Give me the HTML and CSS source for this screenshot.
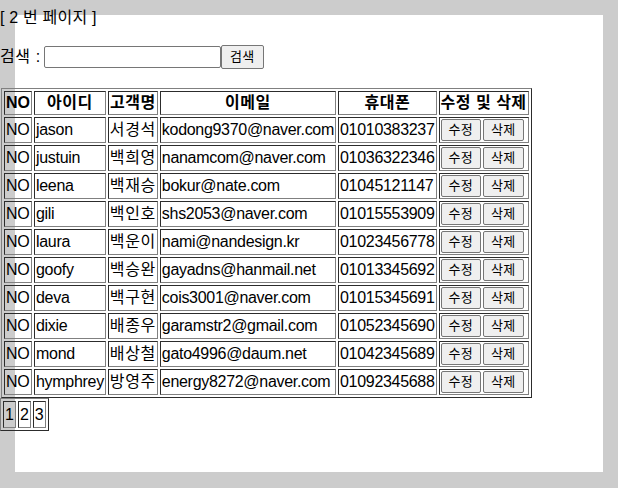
FILE: index.html
```html
<!DOCTYPE html>
<html lang="ko">
<head>
<meta charset="utf-8">
<link rel="stylesheet" href="styles.css">
</head>
<body>
<div class="title">[ 2 번 페이지 ]</div>
<form class="search">
  <span class="search-label">검색 :</span>
  <input type="text" class="search-input">
  <button type="button" class="btn btn-search">검색</button>
</form>
<table class="list" border="1">
  <thead>
    <tr><th>NO</th><th>아이디</th><th>고객명</th><th>이메일</th><th>휴대폰</th><th>수정 및 삭제</th></tr>
  </thead>
  <tbody>
    <tr><td>NO</td><td>jason</td><td class="name">서경석</td><td>kodong9370@naver.com</td><td>01010383237</td><td><button class="btn">수정</button><button class="btn">삭제</button></td></tr>
    <tr><td>NO</td><td>justuin</td><td class="name">백희영</td><td>nanamcom@naver.com</td><td>01036322346</td><td><button class="btn">수정</button><button class="btn">삭제</button></td></tr>
    <tr><td>NO</td><td>leena</td><td class="name">백재승</td><td>bokur@nate.com</td><td>01045121147</td><td><button class="btn">수정</button><button class="btn">삭제</button></td></tr>
    <tr><td>NO</td><td>gili</td><td class="name">백인호</td><td>shs2053@naver.com</td><td>01015553909</td><td><button class="btn">수정</button><button class="btn">삭제</button></td></tr>
    <tr><td>NO</td><td>laura</td><td class="name">백운이</td><td>nami@nandesign.kr</td><td>01023456778</td><td><button class="btn">수정</button><button class="btn">삭제</button></td></tr>
    <tr><td>NO</td><td>goofy</td><td class="name">백승완</td><td>gayadns@hanmail.net</td><td>01013345692</td><td><button class="btn">수정</button><button class="btn">삭제</button></td></tr>
    <tr><td>NO</td><td>deva</td><td class="name">백구현</td><td>cois3001@naver.com</td><td>01015345691</td><td><button class="btn">수정</button><button class="btn">삭제</button></td></tr>
    <tr><td>NO</td><td>dixie</td><td class="name">배종우</td><td>garamstr2@gmail.com</td><td>01052345690</td><td><button class="btn">수정</button><button class="btn">삭제</button></td></tr>
    <tr><td>NO</td><td>mond</td><td class="name">배상철</td><td>gato4996@daum.net</td><td>01042345689</td><td><button class="btn">수정</button><button class="btn">삭제</button></td></tr>
    <tr><td>NO</td><td>hymphrey</td><td class="name">방영주</td><td>energy8272@naver.com</td><td>01092345688</td><td><button class="btn">수정</button><button class="btn">삭제</button></td></tr>
  </tbody>
</table>
<table class="pager" border="1">
  <tr><td>1</td><td>2</td><td>3</td></tr>
</table>
</body>
</html>
```
FILE: styles.css
```css
html {
  background: #cccccc;
}
body {
  margin: 0;
  padding-top: 8px;
  min-height: 480px;
  font-family: "Liberation Sans", "Noto Sans CJK KR", sans-serif;
  font-size: 16px;
  line-height: 20px;
  color: #000;
  background: linear-gradient(#fff, #fff) 15px 15px / 588px 457px no-repeat, #cccccc;
}
.title {
  margin: 0;
  letter-spacing: 0.2px;
}
.search {
  margin: 17px 0 0 0;
  display: flex;
  align-items: center;
  height: 24px;
}
.search-label {
  margin-right: 3px;
  letter-spacing: 0.6px;
}
.search-input {
  box-sizing: border-box;
  width: 177px;
  height: 22px;
  padding: 1px 2px;
  border: 1px solid #767676;
  border-radius: 2px;
  font: inherit;
  font-size: 13px;
  margin: 0;
}
.btn {
  font-family: "Liberation Sans", "Noto Sans CJK KR", sans-serif;
  font-size: 13px;
  line-height: 18px;
  padding: 1px 7px;
  margin: 0;
  border: 1px solid #767676;
  border-radius: 2px;
  background: #efefef;
  color: #000;
  vertical-align: middle;
  letter-spacing: 0.3px;
}
.btn-search {
  box-sizing: border-box;
  height: 24px;
  width: 43px;
  padding: 2px 6px;
}
.list {
  margin: 19px 0 0 1px;
  border-collapse: separate;
  border-spacing: 2px;
  border: 1px outset #808080;
}
.list th,
.list td {
  border: 1px inset #808080;
  padding: 1px;
  white-space: nowrap;
}
.list th {
  font-weight: bold;
  text-align: center;
  height: 20px;
  line-height: 20px;
  letter-spacing: 0.5px;
}
.list th:first-child {
  letter-spacing: 0;
}
.list td {
  height: 22px;
  line-height: 20px;
  text-align: left;
  letter-spacing: -0.3px;
}
.list td.name {
  letter-spacing: 0.6px;
}
.list .btn {
  box-sizing: border-box;
  height: 22px;
}
.list td .btn + .btn {
  margin-left: 2px;
}
.pager {
  border-collapse: separate;
  border-spacing: 2px;
  border: 1px outset #808080;
}
.pager td {
  border: 1px inset #808080;
  padding: 1px;
  line-height: 23px;
}
```
